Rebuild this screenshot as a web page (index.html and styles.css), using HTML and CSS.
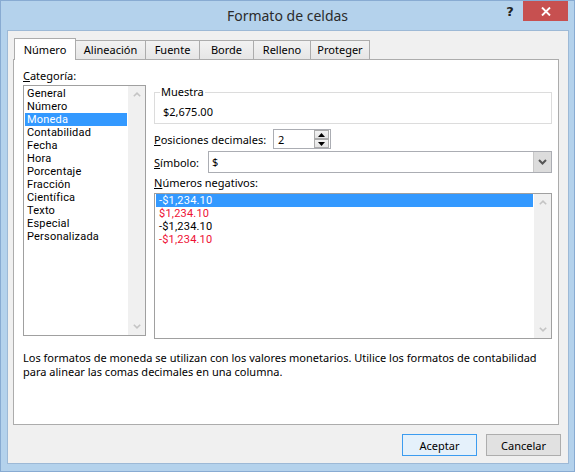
FILE: index.html
```html
<!DOCTYPE html>
<html lang="es">
<head>
    <meta charset="UTF-8">
    <title>Formato de celdas</title>
    <link rel="stylesheet" href="styles.css">
</head>
<body>
    <div class="window">
        <div class="titlebar">
            <div class="title">Formato de celdas</div>
            <div class="caption-buttons">
                <span class="help">?</span>
                <span class="close">
                    <svg width="10" height="9" viewBox="0 0 10 9"><path d="M1 0.5 L9 8.5 M9 0.5 L1 8.5" stroke="#fff" stroke-width="1.9" fill="none"/></svg>
                </span>
            </div>
        </div>

        <div class="client">
            <div class="tabs">
                <div class="tab active w-numero">Número</div>
                <div class="tab w-alineacion">Alineación</div>
                <div class="tab w-fuente">Fuente</div>
                <div class="tab w-borde">Borde</div>
                <div class="tab w-relleno">Relleno</div>
                <div class="tab w-proteger">Proteger</div>
            </div>

            <div class="panel">
                <div class="columns">
                    <div class="col-left">
                        <div class="label"><u>C</u>ategoría:</div>
                        <div class="listbox cat-list">
                            <ul class="items">
                                <li>General</li>
                                <li>Número</li>
                                <li class="selected">Moneda</li>
                                <li>Contabilidad</li>
                                <li>Fecha</li>
                                <li>Hora</li>
                                <li>Porcentaje</li>
                                <li>Fracción</li>
                                <li>Científica</li>
                                <li>Texto</li>
                                <li>Especial</li>
                                <li>Personalizada</li>
                            </ul>
                            <div class="scrollbar">
                                <span class="arrow"><svg width="8" height="5" viewBox="0 0 8 5"><path d="M0.8 4.3 L4 1.2 L7.2 4.3" stroke="#c4c4c4" stroke-width="1.6" fill="none"/></svg></span>
                                <span class="arrow"><svg width="8" height="5" viewBox="0 0 8 5"><path d="M0.8 0.7 L4 3.8 L7.2 0.7" stroke="#c4c4c4" stroke-width="1.6" fill="none"/></svg></span>
                            </div>
                        </div>
                    </div>

                    <div class="col-right">
                        <fieldset class="sample">
                            <legend>Muestra</legend>
                            <div class="sample-value">$2,675.00</div>
                        </fieldset>

                        <div class="row decimals">
                            <span class="row-label"><u>P</u>osiciones decimales:</span>
                            <div class="spin">
                                <span class="spin-value">2</span>
                                <div class="spin-buttons">
                                    <span class="spin-btn"><svg width="7" height="4" viewBox="0 0 7 4"><path d="M0 4 L3.5 0 L7 4 Z" fill="#000"/></svg></span>
                                    <span class="spin-btn"><svg width="7" height="4" viewBox="0 0 7 4"><path d="M0 0 L3.5 4 L7 0 Z" fill="#000"/></svg></span>
                                </div>
                            </div>
                        </div>

                        <div class="row symbol">
                            <span class="row-label"><u>S</u>ímbolo:</span>
                            <div class="combo">
                                <span class="combo-value">$</span>
                                <span class="combo-btn"><svg width="9" height="6" viewBox="0 0 9 6"><path d="M1 1 L4.5 4.5 L8 1" stroke="#555" stroke-width="2" fill="none"/></svg></span>
                            </div>
                        </div>

                        <div class="label neg-label"><u>N</u>úmeros negativos:</div>
                        <div class="listbox neg-list">
                            <ul class="items">
                                <li class="selected">-$1,234.10</li>
                                <li class="red">$1,234.10</li>
                                <li>-$1,234.10</li>
                                <li class="red">-$1,234.10</li>
                            </ul>
                            <div class="scrollbar">
                                <span class="arrow"><svg width="8" height="5" viewBox="0 0 8 5"><path d="M0.8 4.3 L4 1.2 L7.2 4.3" stroke="#c4c4c4" stroke-width="1.6" fill="none"/></svg></span>
                                <span class="arrow"><svg width="8" height="5" viewBox="0 0 8 5"><path d="M0.8 0.7 L4 3.8 L7.2 0.7" stroke="#c4c4c4" stroke-width="1.6" fill="none"/></svg></span>
                            </div>
                        </div>
                    </div>
                </div>

                <p class="desc">Los formatos de moneda se utilizan con los valores monetarios. Utilice los formatos de contabilidad<br>para alinear las comas decimales en una columna.</p>
            </div>

            <div class="buttons">
                <button class="btn default">Aceptar</button>
                <button class="btn">Cancelar</button>
            </div>
        </div>
    </div>
</body>
</html>
```

FILE: styles.css
```css
body {
    margin: 0;
    font-family: "Noto Sans", "Open Sans", sans-serif;
    font-size: 11px;
    color: #000;
}
.window {
    width: 575px;
    height: 472px;
    box-sizing: border-box;
    border: 1px solid #88abd2;
    background: #b4d2ec;
}

/* title bar */
.titlebar {
    height: 29px;
    display: grid;
    grid-template-columns: 1fr auto 1fr;
}
.title {
    grid-column: 2;
    font-size: 14px;
    line-height: 30px;
    color: #2b2b2b;
}
.caption-buttons {
    grid-column: 3;
    justify-self: end;
    display: flex;
    margin-right: 6px;
}
.help {
    width: 26px;
    height: 20px;
    line-height: 22px;
    text-align: center;
    font-family: "DejaVu Sans", sans-serif;
    font-weight: bold;
    font-size: 13px;
    color: #222;
}
.close {
    width: 45px;
    height: 20px;
    background: #c75050;
    display: flex;
    align-items: center;
    justify-content: center;
}

/* client area */
.client {
    margin-left: 6px;
    width: 562px;
    height: 434px;
    box-sizing: border-box;
    border: 1px solid #9db9d6;
    background: #f0f0f0;
    padding: 7px 7px 0 5px;
}
.tabs {
    display: flex;
    align-items: flex-end;
    height: 22px;
    margin-left: 1px;
    margin-bottom: -1px;
}
.tab {
    box-sizing: border-box;
    height: 20px;
    padding-top: 1px;
    line-height: 16px;
    text-align: center;
    border: 1px solid #acacac;
    background: linear-gradient(#f2f2f2, #e6e6e6);
    margin-left: -1px;
}
.tab:first-child {
    margin-left: 0;
}
.tab.active {
    position: relative;
    z-index: 1;
    height: 22px;
    padding-top: 3px;
    border-bottom: none;
    background: #fff;
}
.w-numero { width: 62px; }
.w-alineacion { width: 71px; }
.w-fuente { width: 55px; }
.w-borde { width: 55px; }
.w-relleno { width: 58px; }
.w-proteger { width: 60px; }

.panel {
    box-sizing: border-box;
    width: 546px;
    height: 366px;
    border: 1px solid #acacac;
    background: #fff;
    padding: 8px 6px 0 9px;
}
.columns {
    display: flex;
    gap: 8px;
}
.col-left {
    width: 123px;
}
.col-right {
    width: 398px;
}
.label {
    line-height: 16px;
    height: 16px;
}

/* list boxes */
.listbox {
    box-sizing: border-box;
    display: flex;
    border: 1px solid #a0a0a0;
    background: #fff;
}
.cat-list {
    margin-top: 1px;
    height: 251px;
}
.neg-list {
    margin-top: 2px;
    height: 146px;
}
.items {
    flex: 1;
    list-style: none;
    margin: 0;
    padding: 0;
}
.cat-list .items {
    padding-top: 1px;
}
.items li {
    height: 13px;
    line-height: 13px;
    margin: 0 1px;
    padding-left: 2px;
    font-family: Roboto, sans-serif;
    letter-spacing: 0.2px;
    white-space: nowrap;
}
.neg-list .items li {
    padding-left: 3px;
}
.items li.selected {
    background: #3399ff;
    color: #fff;
}
.items li.red {
    color: #ee1034;
}
.scrollbar {
    width: 17px;
    background: #f0f0f0;
    display: flex;
    flex-direction: column;
    justify-content: space-between;
}
.arrow {
    height: 17px;
    display: flex;
    align-items: center;
    justify-content: center;
}

/* right column controls */
.sample {
    box-sizing: border-box;
    min-width: 0;
    width: 398px;
    margin: 16px 0 0;
    padding: 4px 0 3px 5px;
    border: 1px solid #dcdcdc;
}
.sample legend {
    padding: 0 1px;
    line-height: 16px;
}
.sample-value {
    line-height: 16px;
    padding-left: 3px;
}
.row {
    display: flex;
    align-items: center;
}
.decimals {
    margin-top: 5px;
    height: 20px;
}
.decimals .row-label {
    width: 119px;
}
.spin {
    box-sizing: border-box;
    width: 58px;
    height: 20px;
    border: 1px solid #abadb3;
    display: flex;
    align-items: center;
    justify-content: space-between;
}
.spin-value {
    padding-left: 4px;
}
.spin-buttons {
    display: flex;
    flex-direction: column;
    margin-right: 1px;
}
.spin-btn {
    box-sizing: border-box;
    width: 15px;
    height: 9px;
    border: 1px solid #acacac;
    background: linear-gradient(#f2f2f2, #e4e4e4);
    display: flex;
    align-items: center;
    justify-content: center;
}
.symbol {
    margin-top: 2px;
    height: 22px;
}
.symbol .row-label {
    width: 54px;
}
.combo {
    box-sizing: border-box;
    width: 344px;
    height: 22px;
    border: 1px solid #abadb3;
    display: flex;
    justify-content: space-between;
}
.combo-value {
    padding-left: 3px;
    line-height: 20px;
}
.combo-btn {
    width: 17px;
    background: #dcdcdc;
    border-left: 1px solid #c8c8c8;
    display: flex;
    align-items: center;
    justify-content: center;
}
.neg-label {
    margin-top: 2px;
}

.desc {
    margin: 12px 0 0;
    line-height: 14px;
    white-space: nowrap;
}

/* dialog buttons */
.buttons {
    display: flex;
    justify-content: flex-end;
    gap: 9px;
    margin-top: 9px;
}
.btn {
    box-sizing: border-box;
    width: 75px;
    height: 22px;
    padding: 0;
    font-family: inherit;
    font-size: 11px;
    color: #000;
    background: #e1e1e1;
    border: 1px solid #adadad;
}
.btn.default {
    border-color: #3c9cf0;
    background: #e5f1fb;
}
```
